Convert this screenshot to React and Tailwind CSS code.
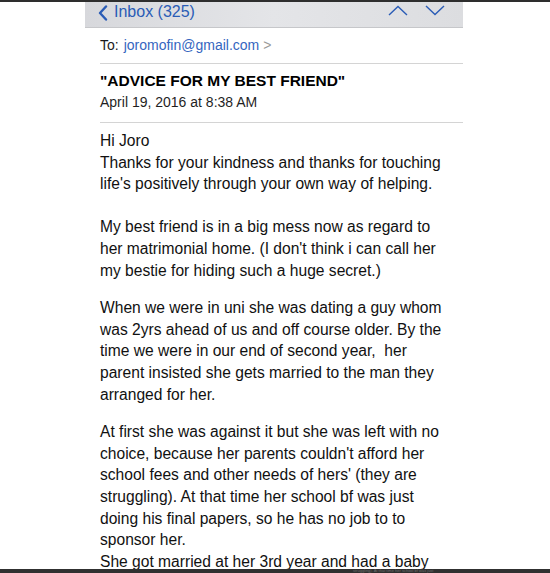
import React from "react";

const para1 = [
  "Hi Joro",
  "Thanks for your kindness and thanks for touching",
  "life's positively through your own way of helping.",
  "\u00a0",
  "My best friend is in a big mess now as regard to",
  "her matrimonial home. (I don't think i can call her",
  "my bestie for hiding such a huge secret.)",
];

const para2 = [
  "When we were in uni she was dating a guy whom",
  "was 2yrs ahead of us and off course older. By the",
  "time we were in our end of second year,\u00a0 her",
  "parent insisted she gets married to the man they",
  "arranged for her.",
];

const para3 = [
  "At first she was against it but she was left with no",
  "choice, because her parents couldn't afford her",
  "school fees and other needs of hers' (they are",
  "struggling). At that time her school bf was just",
  "doing his final papers, so he has no job to to",
  "sponsor her.",
  "She got married at her 3rd year and had a baby",
];

function Lines({ lines }) {
  return (
    <div>
      {lines.map((l, i) => (
        <div key={i} className="whitespace-nowrap">
          {l}
        </div>
      ))}
    </div>
  );
}

export default function App() {
  return (
    <div className="w-[550px] h-[573px] overflow-hidden bg-white flex flex-col font-['Liberation_Sans',Arial,sans-serif] text-[#111]">
      {/* top edge */}
      <div className="h-[2px] bg-[#2e2e2e] flex-shrink-0" />

      <div className="flex-1 min-h-0 overflow-hidden pl-[85px]">
        <div className="w-[378px]">
          {/* nav bar */}
          <div className="h-[26px] flex items-center bg-gradient-to-r from-[#d7d8dc] via-[#e4e5e8] to-[#dcdde0] border-b border-[#c6c7ca] pl-[13px] pr-[18px]">
            <svg width="10" height="16" viewBox="0 0 10 16" className="mr-[6px] -mt-[3px]">
              <path d="M8 1.5 L2 8 L8 14.5" fill="none" stroke="#2a5cb6" strokeWidth="2.4" strokeLinecap="round" strokeLinejoin="round" />
            </svg>
            <span className="text-[16px] text-[#2a5cb6] leading-none -mt-[5px]">Inbox (325)</span>
            <div className="ml-auto flex items-center gap-[17px] -mt-[8px]">
              <svg width="20" height="11" viewBox="0 0 20 11">
                <path d="M1 10 L10 1.5 L19 10" fill="none" stroke="#2a5cb6" strokeWidth="1.4" />
              </svg>
              <svg width="20" height="11" viewBox="0 0 20 11">
                <path d="M1 1 L10 9.5 L19 1" fill="none" stroke="#2a5cb6" strokeWidth="1.4" />
              </svg>
            </div>
          </div>

          <div className="pl-[15px]">
            {/* recipient */}
            <div className="h-[36px] flex items-center text-[14px] border-b border-[#d4d4d4]">
              <span className="text-[#1a1a1a]">To:</span>
              <span className="ml-[5px] text-[#3566c0]">joromofin@gmail.com</span>
              <span className="ml-[4px] text-[#9a9a9a]">&gt;</span>
            </div>

            {/* subject */}
            <div className="pt-[6px] pb-[10px] border-b border-[#d4d4d4]">
              <div className="text-[15.5px] font-bold leading-[22px] text-black">"ADVICE FOR MY BEST FRIEND"</div>
              <div className="text-[14px] leading-[20px] text-[#1f1f1f]">April 19, 2016 at 8:38 AM</div>
            </div>

            {/* body */}
            <div className="pt-[7px] text-[15.6px] leading-[21.6px] text-[#111] flex flex-col gap-[16px]">
              <Lines lines={para1} />
              <Lines lines={para2} />
              <Lines lines={para3} />
            </div>
          </div>
        </div>
      </div>

      {/* bottom edge */}
      <div className="h-[4px] bg-[#303030] flex-shrink-0 pl-[353px] overflow-hidden">
        <div className="text-[4px] leading-[4px] text-[#6e6e6e] whitespace-nowrap">
          struggling). At that time her school bf was just
        </div>
      </div>
    </div>
  );
}
